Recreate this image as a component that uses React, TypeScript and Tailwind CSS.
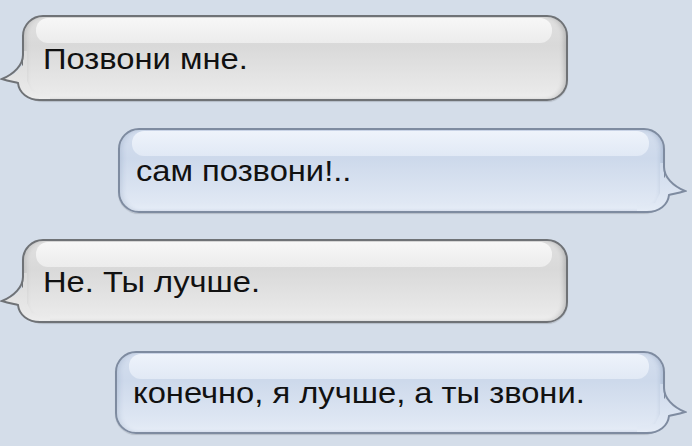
import React from "react";

type Tone = "grey" | "blue";

const stops: Record<Tone, [string, string][]> = {
  grey: [
    ["0%", "#e0e0e0"],
    ["35%", "#d9d9d9"],
    ["90%", "#e9e9e9"],
    ["100%", "#eeeeee"],
  ],
  blue: [
    ["0%", "#d4deee"],
    ["35%", "#cdd9eb"],
    ["90%", "#e0e8f4"],
    ["100%", "#e6edf7"],
  ],
};

const TAIL = "M23 4 C23 14 14 23 2 28 C8 30 14 31 18 32 C19 42 28 49 40 49 L50 49";

function Tail({ tone, h, id }: { tone: Tone; h: number; id: string }) {
  const stroke = tone === "grey" ? "#6f7276" : "#7e8ba0";
  const side =
    tone === "grey" ? "left-[-22px]" : "right-[-22px] scale-x-[-1]";

  return (
    <svg
      className={`absolute bottom-[-2px] w-[50px] h-[52px] ${side}`}
      viewBox="0 0 50 52"
    >
      <defs>
        <linearGradient
          id={id}
          gradientUnits="userSpaceOnUse"
          x1="0"
          y1={50 - h}
          x2="0"
          y2="50"
        >
          {stops[tone].map(([o, c]) => (
            <stop key={o} offset={o} stopColor={c} />
          ))}
        </linearGradient>
      </defs>
      {/* fill under the tail, hides the body's corner border */}
      <path
        d={`M27 0 L24 0 L24 4 L23 4 ${TAIL.slice(7)} L50 42 L32 40 L27 30 Z`}
        fill={`url(#${id})`}
      />
      <path d={TAIL} fill="none" stroke={stroke} strokeWidth="2" />
    </svg>
  );
}

function Bubble({
  tone,
  text,
  h,
  id,
  className,
}: {
  tone: Tone;
  text: string;
  h: number;
  id: string;
  className: string;
}) {
  const grey = tone === "grey";

  return (
    <div className={`relative shrink-0 ${className}`}>
      <div
        className={
          grey
            ? "relative w-full h-full rounded-[21px] border-2 border-[#6f7276] bg-[linear-gradient(to_bottom,#e0e0e0,#d9d9d9_35%,#e9e9e9_90%,#eeeeee)] shadow-[inset_-4px_0_5px_-2px_rgba(0,0,0,0.18),inset_4px_0_5px_-2px_rgba(0,0,0,0.12),0_1px_1px_rgba(0,0,0,0.15)] overflow-hidden"
            : "relative w-full h-full rounded-[21px] border-2 border-[#7e8ba0] bg-[linear-gradient(to_bottom,#d4deee,#cdd9eb_35%,#e0e8f4_90%,#e6edf7)] shadow-[inset_-4px_0_5px_-2px_rgba(50,80,130,0.22),inset_4px_0_5px_-2px_rgba(50,80,130,0.15),0_1px_1px_rgba(0,0,0,0.15)] overflow-hidden"
        }
      >
        {/* gloss */}
        <div
          className={
            grey
              ? "absolute top-[1px] left-[12px] right-[14px] h-[25px] rounded-[12px] bg-gradient-to-b from-[#f7f7f7] to-[#ececec]"
              : "absolute top-[1px] left-[12px] right-[14px] h-[25px] rounded-[12px] bg-gradient-to-b from-[#eef3fb] to-[#e1e9f5]"
          }
        />
      </div>
      <Tail tone={tone} h={h} id={id} />
      <div
        className={`absolute inset-0 flex items-center pt-[1px] ${
          grey ? "pl-[21px]" : "pl-[18px]"
        }`}
      >
        <span className="origin-left scale-x-[1.09] whitespace-nowrap text-[30px] leading-none text-[#111] font-['Liberation_Sans',Arial,sans-serif]">
          {text}
        </span>
      </div>
    </div>
  );
}

export default function App() {
  return (
    <div className="w-full h-[446px] bg-[#d4dde9] flex flex-col pt-[15px] overflow-hidden">
      <Bubble
        tone="grey"
        text="Позвони мне."
        h={86}
        id="b1"
        className="ml-[22px] w-[546px] h-[86px]"
      />
      <Bubble
        tone="blue"
        text="сам позвони!.."
        h={85}
        id="b2"
        className="mt-[27px] ml-[118px] w-[547px] h-[85px]"
      />
      <Bubble
        tone="grey"
        text="Не. Ты лучше."
        h={84}
        id="b3"
        className="mt-[26px] ml-[22px] w-[546px] h-[84px]"
      />
      <Bubble
        tone="blue"
        text="конечно, я лучше, а ты звони."
        h={83}
        id="b4"
        className="mt-[28px] ml-[115px] w-[550px] h-[83px]"
      />
    </div>
  );
}
